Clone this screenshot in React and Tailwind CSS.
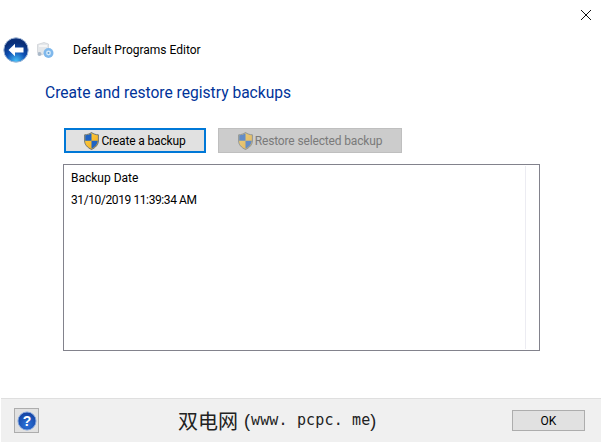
const Shield = ({ id, dim }) => (
  <svg width="15" height="18" viewBox="0 0 15 18" className={dim ? 'shrink-0 opacity-60' : 'shrink-0'}>
    <path d="M7.5 0.5C5.5 2 3 2.8 0.6 2.8V9C0.6 12.6 3.4 15.6 7.5 17.5C11.6 15.6 14.4 12.6 14.4 9V2.8C12 2.8 9.5 2 7.5 0.5Z" fill={`url(#${id})`} stroke="#4f5f70" strokeWidth="0.8" />
    <path d="M7.5 1.3V8.8H1.2V3.3C3.4 3.3 5.6 2.6 7.5 1.3Z" fill="#1f63c4" />
    <path d="M7.5 8.8H13.8C13.6 12.3 11 15 7.5 16.7Z" fill="#1f63c4" />
    <defs>
      <linearGradient id={id} x1="0" y1="0" x2="1" y2="1">
        <stop offset="0" stopColor="#ffd24a" />
        <stop offset="1" stopColor="#f0a818" />
      </linearGradient>
    </defs>
  </svg>
);

const BackIcon = () => (
  <svg width="26" height="26" viewBox="0 0 26 26" className="shrink-0">
    <defs>
      <radialGradient id="backFill" cx="50%" cy="95%" r="75%">
        <stop offset="0" stopColor="#45c0f8" />
        <stop offset="0.55" stopColor="#0e50b4" />
        <stop offset="1" stopColor="#0a2f78" />
      </radialGradient>
    </defs>
    <circle cx="13" cy="13" r="12.2" fill="url(#backFill)" stroke="#9fb6d6" strokeWidth="1" />
    <path d="M5.5 13L12 6.8V10.6H20.5V15.4H12V19.2Z" fill="#fff" />
  </svg>
);

const ProgramIcon = () => (
  <svg width="18" height="18" viewBox="0 0 18 18" className="shrink-0">
    <path d="M1.5 3.5L8 1.5L12.5 3V9.5L6 14L1.5 11.5Z" fill="#e4e7ea" stroke="#c4c8cc" strokeWidth="0.6" />
    <rect x="3" y="4" width="8" height="2" fill="#f6f6f6" />
    <circle cx="3.5" cy="13" r="2" fill="#a9b8c8" />
    <circle cx="12.5" cy="12" r="5" fill="#7fb8ec" />
    <circle cx="12.5" cy="12" r="2.4" fill="#d6eaf9" />
    <circle cx="12.5" cy="12" r="1" fill="#5f9fd8" />
  </svg>
);

const HelpIcon = () => (
  <svg width="20" height="20" viewBox="0 0 20 20">
    <defs>
      <radialGradient id="helpFill" cx="50%" cy="70%" r="70%">
        <stop offset="0" stopColor="#2c74dc" />
        <stop offset="1" stopColor="#123f9e" />
      </radialGradient>
    </defs>
    <circle cx="10" cy="10" r="9" fill="url(#helpFill)" stroke="#7fa3dd" strokeWidth="1" />
    <text x="10" y="15" textAnchor="middle" fontSize="14" fontWeight="700" fontFamily="Liberation Sans, sans-serif" fill="#fff">?</text>
  </svg>
);

export default function App() {
  return (
    <div className="w-[602px] h-[444px] bg-white flex flex-col overflow-hidden text-xs text-black font-['Roboto','Noto_Sans',sans-serif]">
      {/* Close */}
      <div className="h-[36px] flex justify-end pt-[9px] pr-[10px]">
        <svg width="12" height="12" viewBox="0 0 12 12">
          <path d="M1 1L11 11M11 1L1 11" stroke="#111" strokeWidth="1" fill="none" />
        </svg>
      </div>

      {/* Nav row */}
      <div className="h-[28px] flex items-center pl-[3px]">
        <BackIcon />
        <div className="ml-[7px]"><ProgramIcon /></div>
        <span className="ml-[19px] text-[12px] leading-none">Default Programs Editor</span>
      </div>

      {/* Heading */}
      <h1 className="ml-[45px] mt-[19px] h-[20px] leading-[20px] text-[15.6px] text-[#003399]">Create and restore registry backups</h1>

      {/* Actions */}
      <div className="ml-[64px] mt-[25px] flex gap-[12px]">
        <button className="w-[142px] h-[25px] flex items-center justify-center gap-[2px] border-2 border-[#0078d7] bg-[#e1e1e1] text-[12px] tracking-[-0.15px]">
          <Shield id="shieldOn" />
          <span>Create a backup</span>
        </button>
        <button className="w-[184px] h-[25px] flex items-center justify-center gap-[2px] border border-[#bfbfbf] bg-[#cccccc] text-[12px] text-[#7a7a7a] tracking-[-0.15px]">
          <Shield id="shieldOff" dim />
          <span>Restore selected backup</span>
        </button>
      </div>

      {/* Backup list */}
      <div className="ml-[63px] mt-[11px] w-[477px] h-[187px] border border-[#82828c] flex">
        <div className="w-[461px] pl-[7px] pt-[4px] text-[12px] leading-[18px]">
          <div>Backup Date</div>
          <div className="mt-[4px] tracking-[-0.4px]">31/10/2019 11:39:34 AM</div>
        </div>
        <div className="w-px my-px bg-[#ececf2]" />
      </div>

      {/* Footer */}
      <div className="mt-[47px] mx-px h-[44px] bg-[#f0f0f0] border-t border-[#dfdfdf] flex items-center">
        <button className="ml-[13px] w-[25px] h-[25px] border border-[#adadad] bg-[#e1e1e1] flex items-center justify-center">
          <HelpIcon />
        </button>
        <div className="ml-[139px] w-[206px] flex items-center whitespace-nowrap text-[20px] leading-none text-[#222] font-['Noto_Sans_CJK_SC','Noto_Sans',sans-serif]">
          <span>双电网</span>
          <span className="ml-[6px] font-['Liberation_Sans',sans-serif] text-[18px]">(</span>
          <span className="ml-px font-['DejaVu_Sans_Mono',monospace] text-[15px] tracking-[0.15px]">www. pcpc. me</span>
          <span className="font-['Liberation_Sans',sans-serif] text-[18px]">)</span>
        </div>
        <button className="ml-[128px] w-[73px] h-[21px] border border-[#adadad] bg-[#e1e1e1] text-[12px] leading-none">OK</button>
      </div>
    </div>
  );
}
